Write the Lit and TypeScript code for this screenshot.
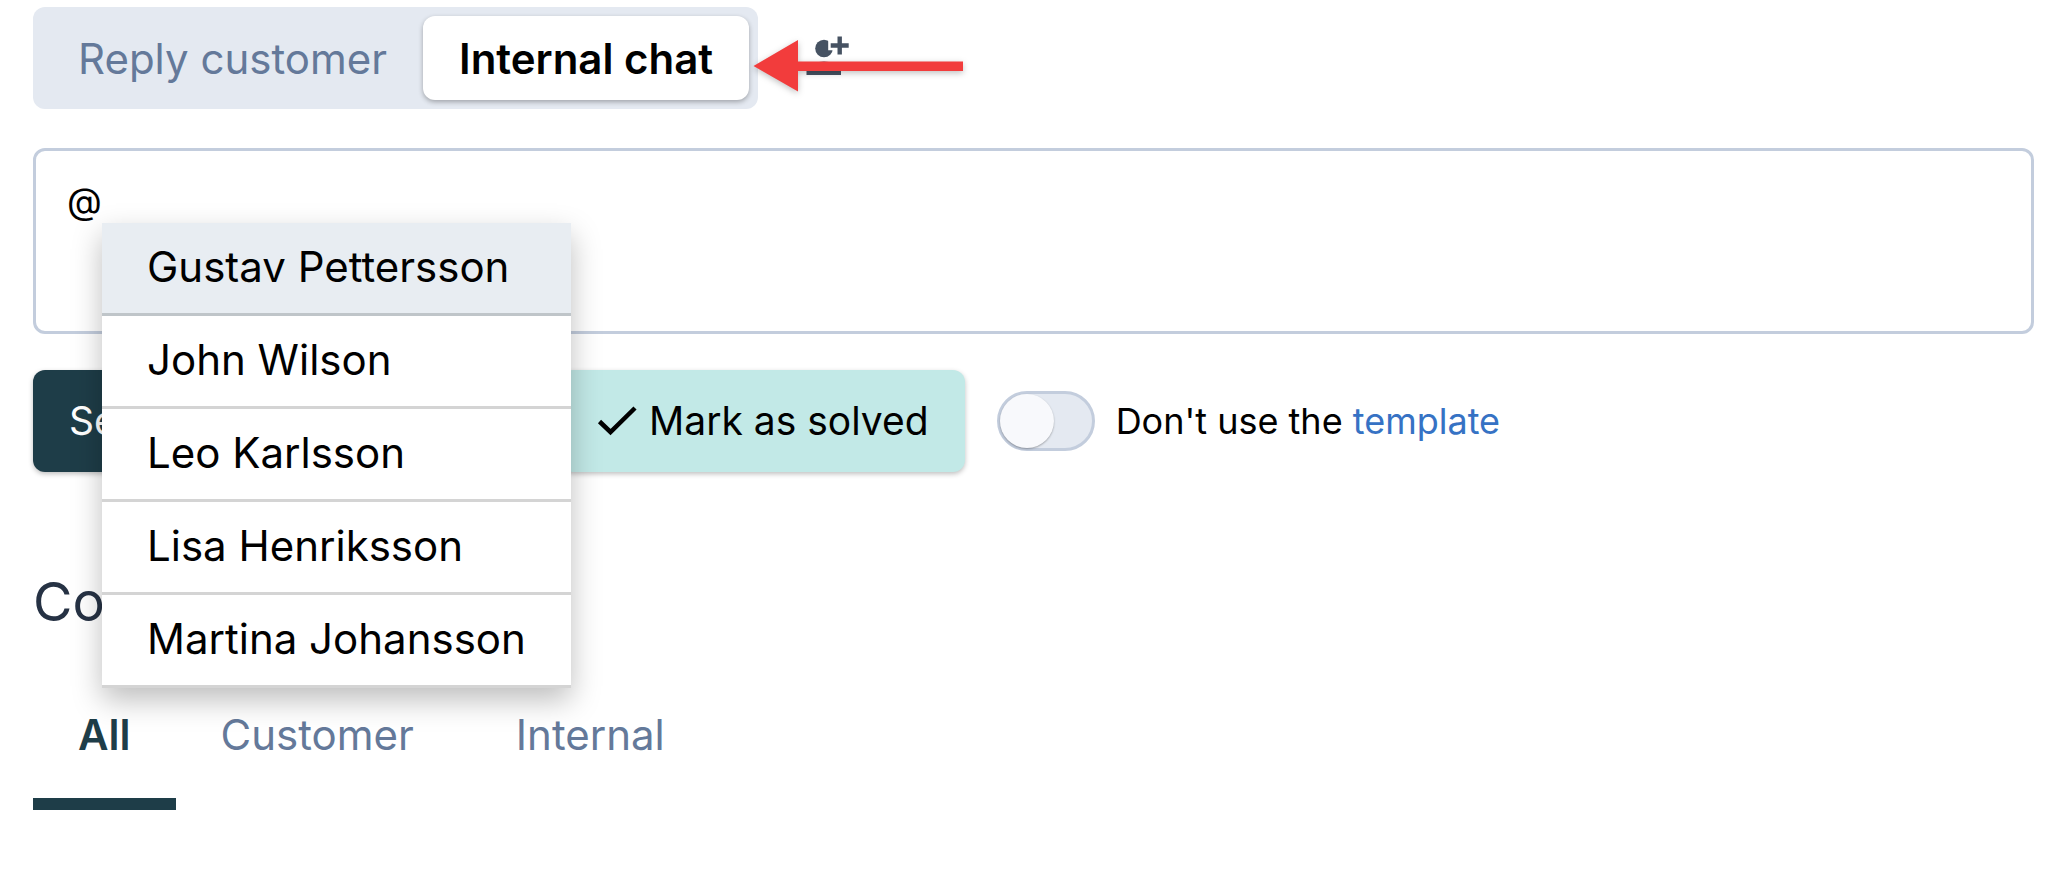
import { LitElement, html, css } from "lit";
import { customElement, state } from "lit/decorators.js";

@customElement("app-root")
export class AppRoot extends LitElement {
  static styles = css`
    :host {
      display: block;
      box-sizing: border-box;
      padding: 7px 33px 32px;
      font-family: Inter, "Liberation Sans", sans-serif;
      color: #000;
      background: #fff;
    }
    *, *::before, *::after { box-sizing: border-box; }
    button, textarea { font: inherit; color: inherit; }
    button { border: 0; background: none; cursor: pointer; white-space: nowrap; }

    .top { display: flex; align-items: flex-start; position: relative; }
    .modes {
      display: flex;
      padding: 9px;
      border-radius: 12px;
      background: #e4e9f1;
      font-size: 42px;
      line-height: 52px;
    }
    .mode { padding: 17px 36px 15px; border-radius: 12px; color: #64799a; }
    .mode.active {
      color: #000;
      background: #fff;
      font-weight: 600;
      box-shadow: 0 2px 5px rgba(0, 0, 0, 0.3);
    }
    .add-person { display: block; padding: 0; margin: 21px 0 0 42px; height: 60px; }
    .add-person svg { display: block; }
    .pointer { position: absolute; left: 720px; top: 30px; filter: drop-shadow(0 2px 3px rgba(0, 0, 0, 0.25)); }

    .composer { position: relative; margin-top: 39px; }
    .message {
      display: block;
      width: 100%;
      height: 186px;
      padding: 28px 31px;
      border: 3px solid #c3cddd;
      border-radius: 12px;
      background: #fff;
      font-size: 36px;
      line-height: 44px;
      resize: none;
      outline: none;
    }
    .mentions {
      position: absolute;
      z-index: 2;
      left: 69px;
      top: 75px;
      margin: 0;
      padding: 0;
      list-style: none;
      background: #fff;
      box-shadow: 0 12px 28px rgba(0, 0, 0, 0.26);
    }
    .mention {
      display: block;
      width: 100%;
      padding: 18px 45px 20px;
      border-bottom: 3px solid #d4d4d4;
      font-size: 42px;
      line-height: 52px;
      text-align: left;
    }
    .mention.active { background: #e8edf2; border-color: #bfc5c9; }

    .actions { display: flex; align-items: center; gap: 32px; margin-top: 36px; }
    .action {
      display: flex;
      align-items: center;
      gap: 12px;
      padding: 27px 36px;
      border-radius: 12px;
      font-size: 39px;
      line-height: 48px;
      box-shadow: 0 2px 5px rgba(0, 0, 0, 0.25);
    }
    .send { min-width: 496px; color: #fff; background: #1e3d48; }
    .solve { background: #c2e9e7; }

    .template { display: flex; align-items: center; gap: 21px; font-size: 36px; line-height: 44px; }
    .switch {
      appearance: none;
      flex: none;
      width: 98px;
      height: 60px;
      margin: 0;
      border: 3px solid #c3cddd;
      border-radius: 30px;
      background: #e4e9f1;
      cursor: pointer;
    }
    .switch::before {
      content: "";
      display: block;
      width: 54px;
      height: 54px;
      border-radius: 50%;
      background: #f8f9fc;
      box-shadow: 0 1px 2px rgba(0, 0, 0, 0.3);
    }
    .switch:checked::before { margin-left: auto; }
    .link { color: #3672c4; text-decoration: none; }

    .title {
      margin: 97px 0 0;
      font-size: 54px;
      line-height: 66px;
      font-weight: 400;
      color: #263244;
    }
    .tabs { display: flex; gap: 12px; margin-top: 74px; font-size: 42px; line-height: 52px; }
    .tab {
      padding: 0 45px 37px;
      border-bottom: 12px solid transparent;
      color: #64799a;
    }
    .tab.active { margin-right: -12px; font-weight: 600; color: #1e3d48; border-color: #1e3d48; }
  `;

  @state() private mode = "Internal chat";
  @state() private mention = 0;
  @state() private filter = "All";

  private people = ["Gustav Pettersson", "John Wilson", "Leo Karlsson", "Lisa Henriksson", "Martina Johansson"];

  render() {
    return html`
      <div class="top">
        <div class="modes" role="group" aria-label="Message type">
          ${["Reply customer", "Internal chat"].map((m) => html`
            <button class="mode ${m === this.mode ? "active" : ""}" aria-pressed=${m === this.mode}
              @click=${() => (this.mode = m)}>${m}</button>`)}
        </div>
        <button class="add-person" aria-label="Add person">
          <svg width="54" height="60" viewBox="0 0 54 60" fill="#465262">
            <circle cx="24" cy="20.500" r="8.800" />
            <path d="M37.500 8.500h4.400v6.800h6.800v4.400h-6.800v6.800h-4.400v-6.800h-6.800v-4.400h6.800z" stroke="#fff" stroke-width="5" paint-order="stroke" />
            <path d="M6.500 47v-4.500c0-6 12-9 17.500-9s17 3 17 9v4.500z" />
          </svg>
        </button>
        <svg class="pointer" width="212" height="58" viewBox="0 0 212 58" aria-hidden="true">
          <path d="M0.500 29L45 3v21.500h165v9.500h-165v20.500z" fill="#f23c3c" />
        </svg>
      </div>

      <div class="composer">
        <textarea class="message" aria-label="Message" .value=${"@"}></textarea>
        <ul class="mentions" aria-label="Mention a colleague">
          ${this.people.map((p, i) => html`
            <li><button class="mention ${i === this.mention ? "active" : ""}"
              @click=${() => (this.mention = i)}>${p}</button></li>`)}
        </ul>
      </div>

      <div class="actions">
        <button class="action send">Send</button>
        <button class="action solve">
          <svg width="40" height="32" viewBox="0 0 40 32" fill="none" stroke="#000" stroke-width="4.500" aria-hidden="true">
            <path d="M2.500 16.500L13.500 27L38 3" />
          </svg>
          Mark as solved
        </button>
        <div class="template">
          <input class="switch" id="no-template" type="checkbox" role="switch" />
          <span><label for="no-template">Don't use the</label> <a class="link" href="#template">template</a></span>
        </div>
      </div>

      <h2 class="title">Conversation</h2>
      <div class="tabs" role="tablist">
        ${["All", "Customer", "Internal"].map((t) => html`
          <button class="tab ${t === this.filter ? "active" : ""}" role="tab" aria-selected=${t === this.filter}
            @click=${() => (this.filter = t)}>${t}</button>`)}
      </div>
    `;
  }
}
